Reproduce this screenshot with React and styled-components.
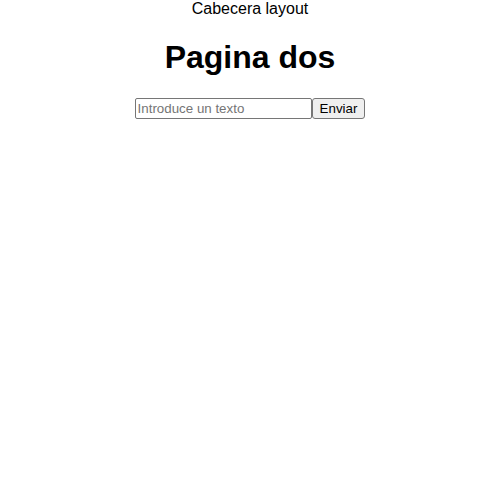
import React from "react";
import styled, { createGlobalStyle } from "styled-components";

const Global = createGlobalStyle`
  body { margin: 0; font-family: "Liberation Sans", Arial, sans-serif; background: #fff; color: #000; }
`;

const Page = styled.div`
  display: flex;
  flex-direction: column;
  align-items: center;
  text-align: center;
`;

const Header = styled.div`
  font-size: 16px;
  line-height: 18px;
`;

const Title = styled.h1`
  font-size: 32px;
  font-weight: bold;
  margin: 21.44px 0;
  line-height: 37px;
`;

const Form = styled.form`
  display: flex;
  align-items: stretch;
`;

const Input = styled.input`
  box-sizing: border-box;
  width: 177px;
  height: 21px;
  font-family: "Liberation Sans", Arial, sans-serif;
  font-size: 13.33px;
  padding: 1px 2px;
  border: 1px solid #767676;
  border-radius: 2px;
  &::placeholder { color: #757575; }
`;

const Button = styled.button`
  box-sizing: border-box;
  height: 21px;
  font-family: "Liberation Sans", Arial, sans-serif;
  font-size: 13.33px;
  padding: 1px 7px;
  background: #efefef;
  border: 1px solid #767676;
  border-radius: 3px;
  color: #000;
`;

export default function App() {
  return (
    <Page>
      <Global />
      <Header>Cabecera layout</Header>
      <Title>Pagina dos</Title>
      <Form onSubmit={(e) => e.preventDefault()}>
        <Input placeholder="Introduce un texto" />
        <Button type="submit">Enviar</Button>
      </Form>
    </Page>
  );
}
